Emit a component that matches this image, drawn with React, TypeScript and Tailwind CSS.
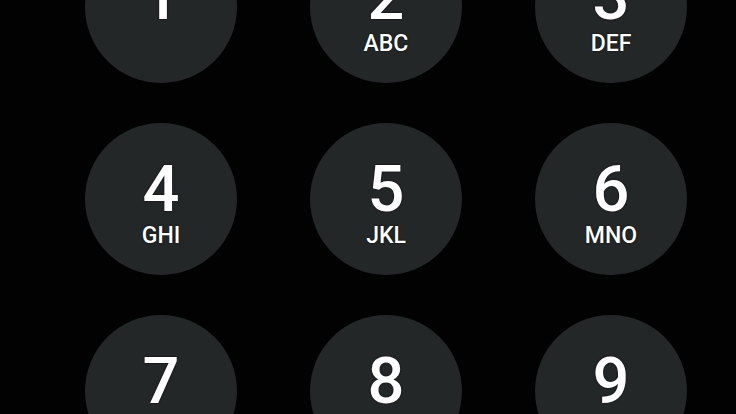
import React from "react";

const keys = [
  { digit: "1", letters: "" },
  { digit: "2", letters: "ABC" },
  { digit: "3", letters: "DEF" },
  { digit: "4", letters: "GHI" },
  { digit: "5", letters: "JKL" },
  { digit: "6", letters: "MNO" },
  { digit: "7", letters: "PQRS" },
  { digit: "8", letters: "TUV" },
  { digit: "9", letters: "WXYZ" },
];

const DialKey: React.FC<{ digit: string; letters: string }> = ({
  digit,
  letters,
}) => (
  <button className="flex h-[152px] w-[152px] flex-col items-center justify-center gap-[2px] rounded-full bg-[#242728] pt-[4px] text-white [text-shadow:0_0_2px_#000]">
    <span className="text-[65px] font-medium leading-none">{digit}</span>
    <span className="h-[22px] text-[23px] font-medium leading-none">
      {letters}
    </span>
  </button>
);

export default function App() {
  return (
    <div className="h-[414px] w-[736px] overflow-hidden bg-[#020202] font-['Roboto',sans-serif]">
      <div className="ml-[85px] mt-[-69px] grid w-max grid-cols-[152px_152px_152px] gap-x-[73px] gap-y-[40px]">
        {keys.map((k) => (
          <DialKey key={k.digit} digit={k.digit} letters={k.letters} />
        ))}
      </div>
    </div>
  );
}
